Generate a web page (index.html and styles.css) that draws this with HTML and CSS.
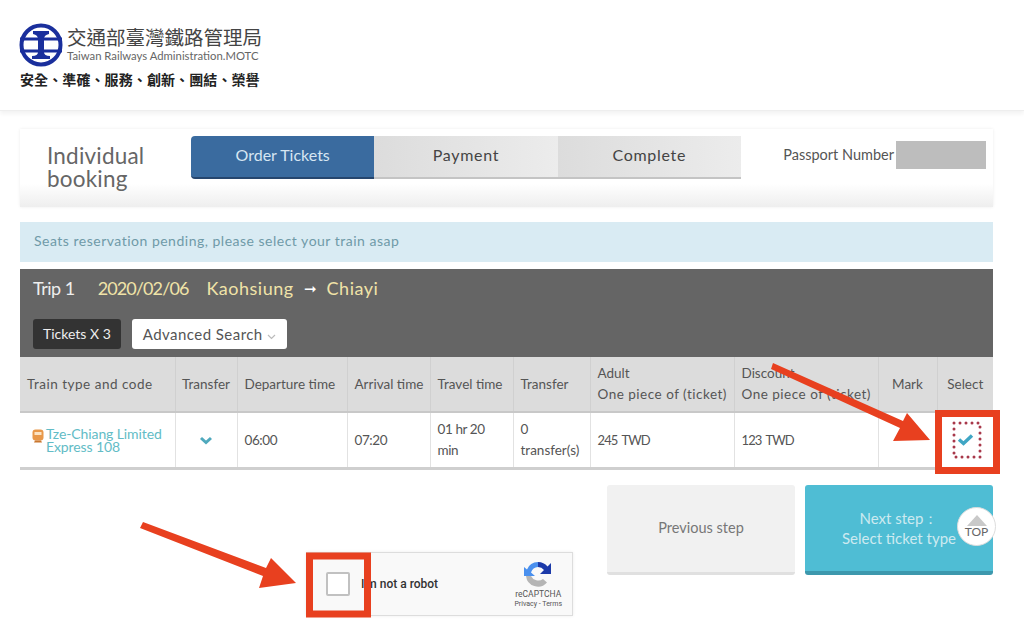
FILE: index.html
```html
<!DOCTYPE html>
<html lang="en">
<head>
    <meta charset="UTF-8">
    <meta name="viewport" content="width=device-width, initial-scale=1.0">
    <title>Individual booking</title>
    <link rel="stylesheet" href="styles.css">
</head>
<body>
    <header class="site-header">
        <div class="logo-row">
            <svg class="logo" width="46" height="46" viewBox="0 0 46 46">
                <circle cx="23" cy="23" r="19.5" fill="none" stroke="#1a2f9c" stroke-width="4"/>
                <path d="M2 17h42M2 29h42" stroke="#1a2f9c" stroke-width="3"/>
                <path d="M15 9h16v3q-5 1-5 5v13q0 4 6 4v3H14v-3q6 0 6-4V17q0-4-5-5z" fill="#1a2f9c"/>
            </svg>
            <div class="logo-text">
                <div class="logo-zh">交通部臺灣鐵路管理局</div>
                <div class="logo-en">Taiwan Railways Administration.MOTC</div>
            </div>
        </div>
        <div class="slogan">安全、準確、服務、創新、團結、榮譽</div>
    </header>

    <main class="content">
        <section class="booking-head">
            <h1>Individual booking</h1>
            <div class="steps">
                <div class="step active">Order Tickets</div>
                <div class="step">Payment</div>
                <div class="step">Complete</div>
            </div>
            <div class="passport">
                <span>Passport Number</span>
                <div class="passport-value"></div>
            </div>
        </section>

        <div class="alert">Seats reservation pending, please select your train asap</div>

        <section class="trip-head">
            <div class="trip-title">
                <span class="trip-no">Trip 1</span>
                <span class="trip-date">2020/02/06</span>
                <span class="trip-city">Kaohsiung</span>
                <span class="trip-arrow">➞</span>
                <span class="trip-city">Chiayi</span>
            </div>
            <div class="trip-tools">
                <span class="tickets">Tickets X 3</span>
                <span class="search">Advanced Search
                    <svg width="9" height="6" viewBox="0 0 9 6"><path d="M1 1l3.5 3.5L8 1" fill="none" stroke="#bbb" stroke-width="1.2"/></svg>
                </span>
            </div>
        </section>

        <table class="trains">
            <colgroup>
                <col class="c-train"><col class="c-transfer"><col class="c-dep"><col class="c-arr"><col class="c-travel">
                <col class="c-trans2"><col class="c-adult"><col class="c-disc"><col class="c-mark"><col class="c-select">
            </colgroup>
            <thead>
                <tr>
                    <th class="wide">Train type and code</th>
                    <th class="center">Transfer</th>
                    <th>Departure time</th>
                    <th>Arrival time</th>
                    <th>Travel time</th>
                    <th>Transfer</th>
                    <th class="two-line">Adult<br><span class="wide">One piece of (ticket)</span></th>
                    <th class="two-line">Discount<br><span class="wide">One piece of (ticket)</span></th>
                    <th class="center">Mark</th>
                    <th class="center">Select</th>
                </tr>
            </thead>
            <tbody>
                <tr>
                    <td class="train-cell">
                        <div class="train-name">
                            <svg class="train-icon" width="12" height="14" viewBox="0 0 12 14">
                                <rect x="0.5" y="0.5" width="11" height="11" rx="3" fill="#e8984a"/>
                                <rect x="2.5" y="3" width="7" height="3" fill="#fbe3c4"/>
                                <path d="M3 11.5h6l1 2H2z" fill="#c9772f"/>
                            </svg>
                            <span>Tze-Chiang Limited Express 108</span>
                        </div>
                    </td>
                    <td class="center">
                        <svg width="14" height="9" viewBox="0 0 14 9"><path d="M2 2l5 4.5L12 2" fill="none" stroke="#4fa9bd" stroke-width="3"/></svg>
                    </td>
                    <td class="num">06:00</td>
                    <td class="num">07:20</td>
                    <td class="tall num">01 hr 20 min</td>
                    <td class="tall">0 transfer(s)</td>
                    <td class="price">245 TWD</td>
                    <td class="price">123 TWD</td>
                    <td></td>
                    <td class="center">
                        <div class="select-box">
                            <svg width="17" height="13" viewBox="0 0 17 13"><path d="M2 6.5l4.5 4L15 2.5" fill="none" stroke="#3fa6c4" stroke-width="3.4"/></svg>
                        </div>
                    </td>
                </tr>
            </tbody>
        </table>

        <div class="actions">
            <a class="btn btn-prev">Previous step</a>
            <a class="btn btn-next">Next step：<br>Select ticket type</a>
        </div>

        <div class="captcha">
            <div class="captcha-check"></div>
            <span class="captcha-label">I'm not a robot</span>
            <div class="captcha-brand">
                <svg width="30" height="30" viewBox="0 0 30 30">
                    <path d="M15 3a12 12 0 0 1 9.5 4.6L28 4v11H17l4-4a8 8 0 0 0-6-3z" fill="#1c3aa9"/>
                    <path d="M15 3a12 12 0 0 0-11 7.5L1 8v9h11l-4-3.6A8 8 0 0 1 15 8z" fill="#4a90ee"/>
                    <path d="M3 17a12 12 0 0 0 21 6.5l-4-3.5a8 8 0 0 1-12-3z" fill="#b5b5b5"/>
                </svg>
                <div class="captcha-name">reCAPTCHA</div>
                <div class="captcha-links">Privacy - Terms</div>
            </div>
        </div>
    </main>

    <a class="top-btn">
        <svg width="22" height="12" viewBox="0 0 22 12"><path d="M1 12L11 1l10 11z" fill="#c9c9c9"/></svg>
        <span>TOP</span>
    </a>

    <!-- red arrows and boxes drawn on top of the screenshot -->
    <svg class="marks" width="1024" height="641" viewBox="0 0 1024 641">
        <g fill="#e8401f">
            <path d="M771 369L773 363 903 421 907 413 930 440 893 441 900 428z"/>
            <path d="M140 528L143 522 266 568 271 558 296 583 259 588 263 576z"/>
        </g>
        <g fill="none" stroke="#e8401f">
            <rect x="938.5" y="413.5" width="58" height="57" stroke-width="7"/>
            <rect x="309.5" y="556" width="58" height="58" stroke-width="7"/>
        </g>
        <rect x="954" y="423" width="26" height="34" fill="none" stroke="#a8384a" stroke-width="3" stroke-linecap="round" stroke-dasharray="0 6"/>
    </svg>
</body>
</html>
```

FILE: styles.css
```css
html, body {
    margin: 0;
    padding: 0;
    height: 641px;
    overflow: hidden;
}

body {
    position: relative;
    background: #fff;
    color: #555;
    font-family: "Lato", "Liberation Sans", sans-serif;
}

.site-header {
    box-sizing: border-box;
    height: 111px;
    padding: 22px 0 0 20px;
    border-bottom: 1px solid #eee;
    box-shadow: 0 3px 4px rgba(0, 0, 0, 0.05);
}

.logo-row {
    display: flex;
    align-items: flex-start;
}

.logo {
    margin: 0 3px 0 -2px;
}

.logo-text {
    margin-top: 3px;
}

.logo-zh {
    font-family: "Noto Sans CJK TC", sans-serif;
    font-size: 19.5px;
    line-height: 24px;
    color: #444;
}

.logo-en {
    font-size: 11.3px;
    line-height: 13px;
    color: #666;
}

.slogan {
    margin-top: 1px;
    font-family: "Noto Sans CJK TC", sans-serif;
    font-size: 14px;
    font-weight: 700;
    line-height: 20px;
    letter-spacing: 0.1px;
    color: #222;
}

.content {
    width: 973px;
    margin: 18px 0 0 20px;
}

.booking-head {
    box-sizing: border-box;
    display: flex;
    align-items: flex-start;
    height: 78px;
    padding: 7px 7px 0 27px;
    background: linear-gradient(#fff 70%, #eee);
    box-shadow: 0 0 3px rgba(0, 0, 0, 0.08);
}

.booking-head h1 {
    width: 144px;
    margin: 8px 0 0;
    font-size: 22.5px;
    font-weight: 400;
    line-height: 23px;
    letter-spacing: 0.2px;
    color: #666;
}

.steps {
    display: flex;
    width: 550px;
    height: 43px;
}

.step {
    flex: 1;
    text-align: center;
    font-size: 16px;
    line-height: 38px;
    letter-spacing: 0.7px;
    color: #444;
    background: linear-gradient(90deg, #dcdcdc, #ececec);
    border-bottom: 2px solid #c4c4c4;
}

.step.active {
    letter-spacing: 0;
    color: #d6e6f2;
    background: #3a6b9f;
    border-bottom-color: #26466e;
    border-radius: 4px 0 0 4px;
}

.passport {
    display: flex;
    align-items: center;
    margin-left: auto;
    font-size: 14.5px;
    color: #555;
}

.passport span {
    margin-top: 4px;
}

.passport-value {
    width: 90px;
    height: 28px;
    margin: 5px 0 0 2px;
    background: #bdbdbd;
}

.alert {
    box-sizing: border-box;
    height: 40px;
    margin-top: 15px;
    padding-left: 14px;
    font-size: 14px;
    line-height: 38px;
    letter-spacing: 0.5px;
    color: #6f9aa8;
    background: #d9ebf3;
}

.trip-head {
    box-sizing: border-box;
    height: 88px;
    margin-top: 7px;
    padding: 8px 13px 0;
    background: #656565;
}

.trip-title {
    display: flex;
    align-items: center;
    gap: 10px;
    font-size: 18px;
    line-height: 22px;
}

.trip-no {
    margin-right: 13px;
    letter-spacing: -0.5px;
    color: #eee;
}

.trip-date {
    margin-right: 8px;
    letter-spacing: -0.9px;
    color: #f0e3a8;
}

.trip-city {
    letter-spacing: 0.5px;
    color: #f0e3a8;
}

.trip-arrow {
    font-size: 15px;
    color: #fff;
}

.trip-tools {
    display: flex;
    gap: 11px;
    margin-top: 20px;
}

.tickets, .search {
    box-sizing: border-box;
    height: 30px;
    line-height: 30px;
    border-radius: 3px;
}

.tickets {
    padding: 0 10px;
    font-size: 14px;
    color: #eee;
    background: #333;
}

.search {
    padding: 0 11px;
    font-size: 15px;
    letter-spacing: 0.45px;
    color: #555;
    background: #fff;
}

.trains {
    width: 973px;
    table-layout: fixed;
    border-collapse: collapse;
    font-size: 13.5px;
    color: #555;
}

.c-train { width: 155px; }
.c-transfer { width: 62px; }
.c-dep { width: 110px; }
.c-arr { width: 83px; }
.c-travel { width: 83px; }
.c-trans2 { width: 77px; }
.c-adult { width: 144px; }
.c-disc { width: 144px; }
.c-mark { width: 59px; }
.c-select { width: 56px; }

.trains th {
    box-sizing: border-box;
    height: 55px;
    padding: 0 7px;
    text-align: left;
    font-weight: 400;
    white-space: nowrap;
    background: #dcdcdc;
    border-left: 1px solid #d0d0d0;
    border-bottom: 2px solid #c8c8c8;
}

.trains .wide {
    letter-spacing: 0.5px;
}

.trains th.two-line {
    line-height: 21px;
}

.trains th:first-child, .trains td:first-child {
    border-left: none;
}

.trains td {
    box-sizing: border-box;
    height: 56px;
    padding: 0 7px;
    background: #fff;
    border-left: 1px solid #e2e2e2;
    border-bottom: 3px solid #cfcfcf;
}

.trains td.tall {
    line-height: 21px;
}

.trains td.num {
    letter-spacing: -0.4px;
}

.trains td.price {
    font-size: 13px;
    letter-spacing: -0.9px;
    word-spacing: 2px;
}

.trains .center {
    text-align: center;
    padding: 0;
}

.trains td.train-cell {
    padding: 0 0 0 12px;
}

.train-name {
    display: flex;
    align-items: center;
    font-size: 14px;
    line-height: 13px;
    letter-spacing: -0.1px;
    color: #62bcc6;
}

.train-icon {
    flex: none;
    margin: -8px 2px 0 0;
}

.select-box {
    display: flex;
    align-items: center;
    justify-content: center;
    height: 40px;
}

.actions {
    display: flex;
    justify-content: flex-end;
    gap: 10px;
    margin-top: 15px;
}

.btn {
    box-sizing: border-box;
    display: flex;
    align-items: center;
    justify-content: center;
    width: 188px;
    height: 90px;
    text-align: center;
    font-size: 14.5px;
    line-height: 20px;
    border-radius: 3px;
}

.btn-prev {
    color: #777;
    background: #f1f1f1;
    border-bottom: 3px solid #e0e0e0;
}

.btn-next {
    font-size: 15px;
    color: #cdeaf0;
    background: #4fbdd4;
    border-bottom: 4px solid #3d98ad;
}

.captcha {
    box-sizing: border-box;
    display: flex;
    align-items: center;
    width: 267px;
    height: 64px;
    margin: -23px 0 0 286px;
    padding: 0 10px 0 19px;
    background: #f9f9f9;
    border: 1px solid #ddd;
    box-shadow: 0 0 3px rgba(0, 0, 0, 0.08);
}

.captcha-check {
    box-sizing: border-box;
    width: 24px;
    height: 24px;
    background: #fff;
    border: 2px solid #c1c1c1;
    border-radius: 2px;
}

.captcha-label {
    margin-left: 11px;
    font-family: "Roboto", sans-serif;
    font-size: 12px;
    font-weight: 500;
    color: #333;
}

.captcha-brand {
    margin-left: auto;
    text-align: center;
    font-family: "Roboto", sans-serif;
    color: #555;
}

.captcha-brand svg {
    display: block;
    margin: 0 auto;
}

.captcha-name {
    font-size: 8.5px;
    line-height: 11px;
}

.captcha-links {
    font-size: 7px;
    line-height: 9px;
}

.top-btn {
    position: absolute;
    left: 957px;
    top: 507px;
    box-sizing: border-box;
    display: flex;
    flex-direction: column;
    align-items: center;
    width: 39px;
    height: 39px;
    padding-top: 6px;
    background: #fff;
    border: 1px solid #ddd;
    border-radius: 50%;
    font-size: 12px;
    line-height: 12px;
    color: #666;
}

.marks {
    position: absolute;
    left: 0;
    top: 0;
}
```
